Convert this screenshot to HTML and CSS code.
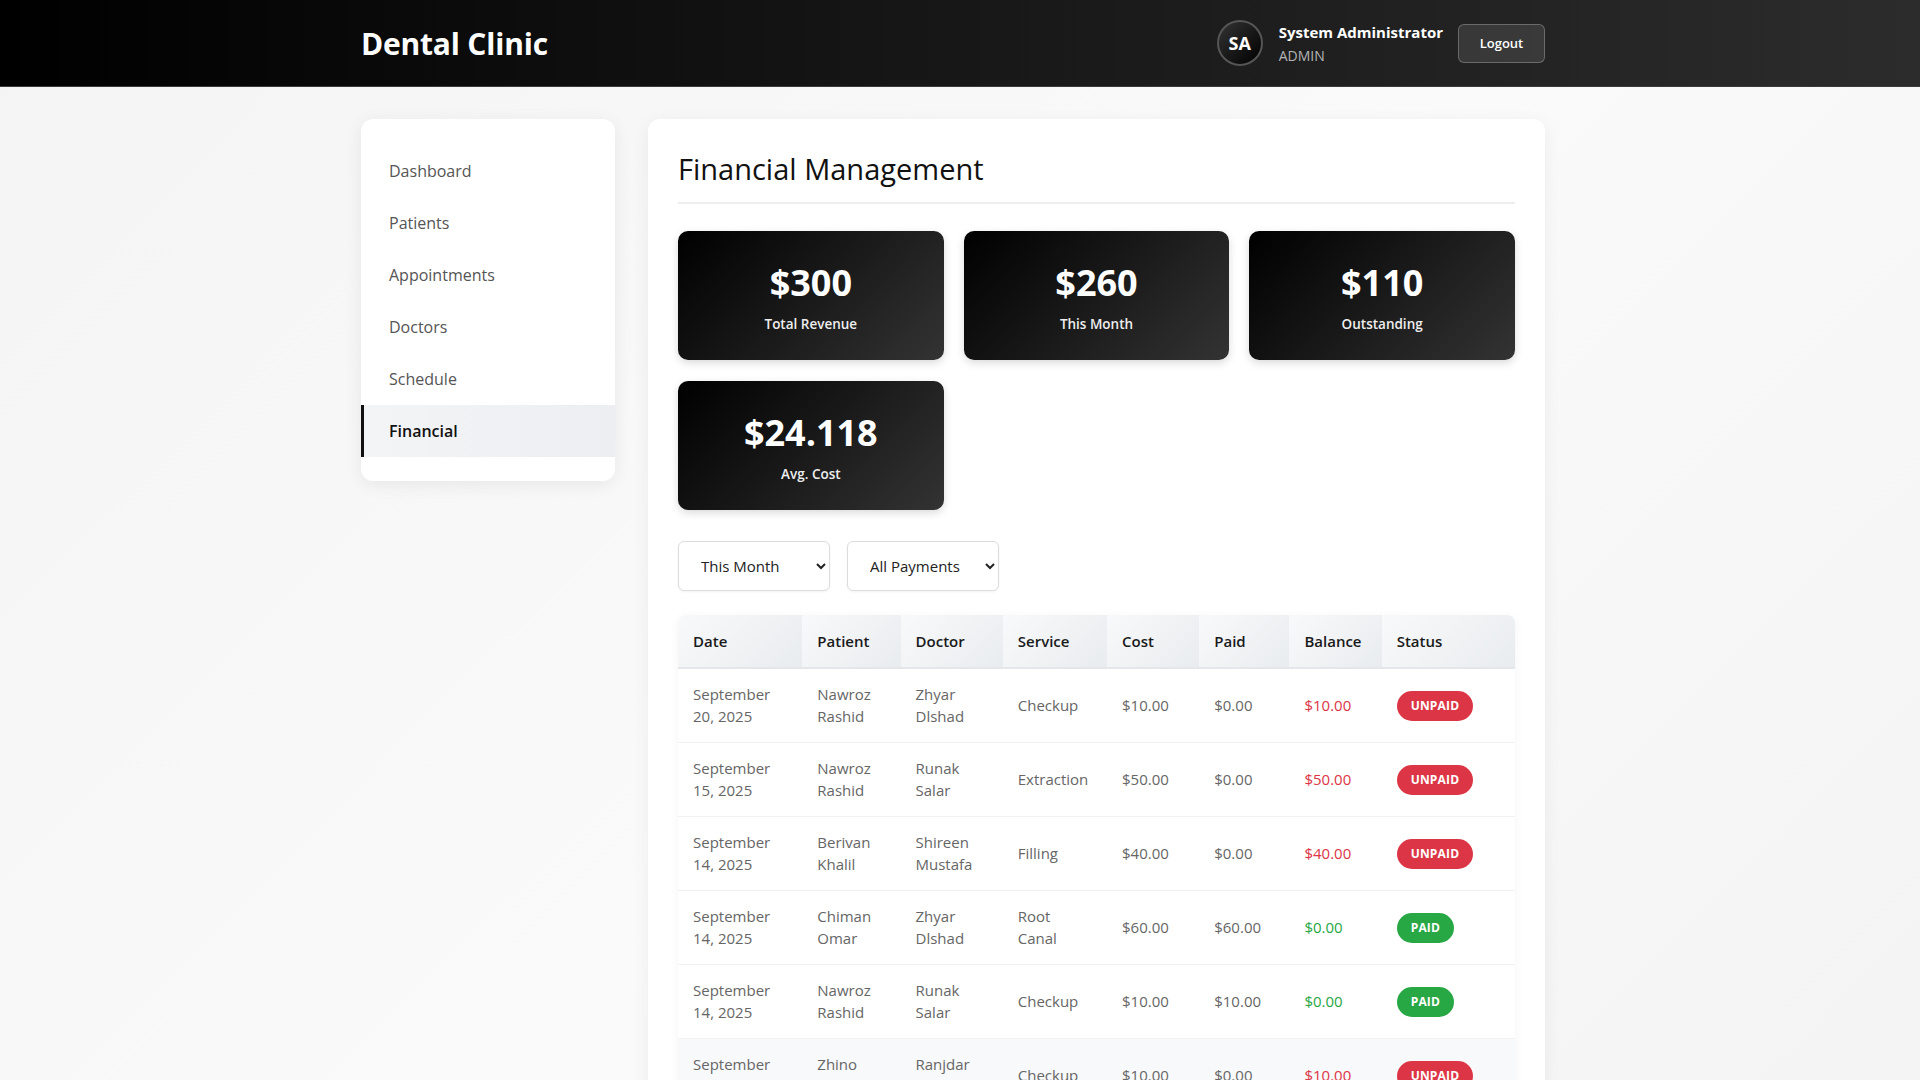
FILE: index.html
```html
<!DOCTYPE html>
<html lang="en">
<head>
  <meta charset="UTF-8">
  <meta name="viewport" content="width=device-width, initial-scale=1.0">
  <title>Dental Clinic - Financial</title>
  <link rel="stylesheet" href="styles.css">
</head>
<body>

<header class="topbar">
  <div class="topbar-inner">
    <h1 class="brand">Dental Clinic</h1>
    <div class="user-box">
      <div class="avatar">SA</div>
      <div class="user-info">
        <div class="user-name">System Administrator</div>
        <div class="user-role">ADMIN</div>
      </div>
      <button class="logout-btn">Logout</button>
    </div>
  </div>
</header>

<div class="layout">
  <aside class="sidebar">
    <ul class="side-nav">
      <li><a href="#">Dashboard</a></li>
      <li><a href="#">Patients</a></li>
      <li><a href="#">Appointments</a></li>
      <li><a href="#">Doctors</a></li>
      <li><a href="#">Schedule</a></li>
      <li class="active"><a href="#">Financial</a></li>
    </ul>
  </aside>

  <main class="content-card">
    <h2 class="page-title">Financial Management</h2>

    <div class="stats-grid">
      <div class="stat-card">
        <div class="stat-value">$300</div>
        <div class="stat-label">Total Revenue</div>
      </div>
      <div class="stat-card">
        <div class="stat-value">$260</div>
        <div class="stat-label">This Month</div>
      </div>
      <div class="stat-card">
        <div class="stat-value">$110</div>
        <div class="stat-label">Outstanding</div>
      </div>
      <div class="stat-card">
        <div class="stat-value">$24.118</div>
        <div class="stat-label">Avg. Cost</div>
      </div>
    </div>

    <div class="filters">
      <select class="filter-select">
        <option>This Month</option>
        <option>Last Month</option>
        <option>This Year</option>
      </select>
      <select class="filter-select">
        <option>All Payments</option>
        <option>Paid</option>
        <option>Unpaid</option>
      </select>
    </div>

    <div class="table-wrap">
      <table class="fin-table">
        <thead>
          <tr>
            <th class="c-date">Date</th>
            <th class="c-patient">Patient</th>
            <th class="c-doctor">Doctor</th>
            <th class="c-service">Service</th>
            <th class="c-cost">Cost</th>
            <th class="c-paid">Paid</th>
            <th class="c-balance">Balance</th>
            <th class="c-status">Status</th>
          </tr>
        </thead>
        <tbody>
          <tr>
            <td>September 20, 2025</td>
            <td>Nawroz Rashid</td>
            <td>Zhyar Dlshad</td>
            <td>Checkup</td>
            <td>$10.00</td>
            <td>$0.00</td>
            <td class="bal-due">$10.00</td>
            <td><span class="badge badge-unpaid">UNPAID</span></td>
          </tr>
          <tr>
            <td>September 15, 2025</td>
            <td>Nawroz Rashid</td>
            <td>Runak Salar</td>
            <td>Extraction</td>
            <td>$50.00</td>
            <td>$0.00</td>
            <td class="bal-due">$50.00</td>
            <td><span class="badge badge-unpaid">UNPAID</span></td>
          </tr>
          <tr>
            <td>September 14, 2025</td>
            <td>Berivan Khalil</td>
            <td>Shireen Mustafa</td>
            <td>Filling</td>
            <td>$40.00</td>
            <td>$0.00</td>
            <td class="bal-due">$40.00</td>
            <td><span class="badge badge-unpaid">UNPAID</span></td>
          </tr>
          <tr>
            <td>September 14, 2025</td>
            <td>Chiman Omar</td>
            <td>Zhyar Dlshad</td>
            <td>Root Canal</td>
            <td>$60.00</td>
            <td>$60.00</td>
            <td class="bal-ok">$0.00</td>
            <td><span class="badge badge-paid">PAID</span></td>
          </tr>
          <tr>
            <td>September 14, 2025</td>
            <td>Nawroz Rashid</td>
            <td>Runak Salar</td>
            <td>Checkup</td>
            <td>$10.00</td>
            <td>$10.00</td>
            <td class="bal-ok">$0.00</td>
            <td><span class="badge badge-paid">PAID</span></td>
          </tr>
          <tr class="row-hover">
            <td>September 13, 2025</td>
            <td>Zhino Ahmed</td>
            <td>Ranjdar Kamal</td>
            <td>Checkup</td>
            <td>$10.00</td>
            <td>$0.00</td>
            <td class="bal-due">$10.00</td>
            <td><span class="badge badge-unpaid">UNPAID</span></td>
          </tr>
          <tr>
            <td>September 12, 2025</td>
            <td>Chiman Omar</td>
            <td>Shireen Mustafa</td>
            <td>Cleaning</td>
            <td>$30.00</td>
            <td>$30.00</td>
            <td class="bal-ok">$0.00</td>
            <td><span class="badge badge-paid">PAID</span></td>
          </tr>
        </tbody>
      </table>
    </div>
  </main>
</div>

</body>
</html>
```

FILE: styles.css
```css
/* General */
* {
  box-sizing: border-box;
}
body {
  margin: 0;
  font-family: "Open Sans", "Noto Sans", Arial, sans-serif;
  color: #333;
  background: linear-gradient(135deg, #f4f4f4 0%, #fafafa 50%, #f3f3f3 100%);
  min-height: 100vh;
}

/* Top bar */
.topbar {
  background: linear-gradient(90deg, #000 0%, #151515 45%, #2c2c2c 100%);
  border-bottom: 1px solid #3a3a3a;
  height: 87px;
}
.topbar-inner {
  width: 1184px;
  margin-left: calc(50% - 599px);
  height: 100%;
  display: flex;
  align-items: center;
  justify-content: space-between;
}
.brand {
  margin: 0;
  color: #fff;
  font-size: 30px;
  font-weight: 700;
  letter-spacing: -0.2px;
}
.user-box {
  display: flex;
  align-items: center;
}
.avatar {
  width: 46px;
  height: 46px;
  border-radius: 50%;
  background: linear-gradient(135deg, #333 0%, #000 100%);
  border: 2px solid #555;
  color: #fff;
  font-weight: 700;
  font-size: 18px;
  display: flex;
  align-items: center;
  justify-content: center;
  margin-right: 16px;
}
.user-info {
  margin-right: 15px;
  padding-top: 2px;
}
.user-name {
  color: #fff;
  font-weight: 700;
  font-size: 15px;
  line-height: 21px;
}
.user-role {
  color: #b5b5b5;
  font-size: 14px;
  line-height: 22px;
  margin-top: 2px;
}
.logout-btn {
  font-family: inherit;
  background: rgba(255, 255, 255, 0.1);
  color: #fff;
  border: 1px solid rgba(255, 255, 255, 0.25);
  border-radius: 6px;
  width: 87px;
  height: 39px;
  font-size: 13px;
  font-weight: 600;
  cursor: pointer;
}

/* Layout */
.layout {
  width: 1184px;
  margin: 32px 0 0 calc(50% - 599px);
  display: flex;
  align-items: flex-start;
  gap: 33px;
}
.sidebar {
  width: 254px;
  flex-shrink: 0;
  background: #fff;
  border-radius: 12px;
  box-shadow: 0 4px 18px rgba(0, 0, 0, 0.07);
  padding: 26px 0 24px;
}
.side-nav {
  list-style: none;
  margin: 0;
  padding: 0;
}
.side-nav li a {
  display: block;
  height: 52px;
  line-height: 52px;
  padding-left: 25px;
  color: #555;
  font-size: 16px;
  font-weight: 500;
  text-decoration: none;
  border-left: 3px solid transparent;
}
.side-nav li.active a {
  background: linear-gradient(90deg, #f3f4f6 0%, #eceef1 100%);
  border-left-color: #111;
  color: #111;
  font-weight: 600;
}

/* Main card */
.content-card {
  flex: 1;
  background: #fff;
  border-radius: 12px;
  box-shadow: 0 4px 18px rgba(0, 0, 0, 0.06);
  padding: 30px 30px 40px;
}
.page-title {
  margin: 0 0 27px;
  font-size: 29px;
  font-weight: 500;
  color: #111;
  line-height: 40px;
  padding-bottom: 13px;
  border-bottom: 2px solid #eee;
}

/* Stats */
.stats-grid {
  display: grid;
  grid-template-columns: repeat(auto-fill, minmax(250px, 1fr));
  gap: 21px 20px;
  margin-bottom: 31px;
}
.stat-card {
  background: linear-gradient(135deg, #000 0%, #1c1c1c 55%, #333 100%);
  color: #fff;
  border-radius: 10px;
  text-align: center;
  padding: 30px 20px 26px;
  box-shadow: 0 3px 8px rgba(0, 0, 0, 0.15);
}
.stat-value {
  font-size: 36px;
  font-weight: 700;
  line-height: 44px;
}
.stat-label {
  margin-top: 9px;
  font-size: 13.5px;
  font-weight: 600;
  line-height: 20px;
  color: #eee;
}

/* Filters */
.filters {
  display: flex;
  gap: 17px;
  margin-bottom: 24px;
}
.filter-select {
  font-family: inherit;
  font-size: 15px;
  color: #222;
  background: #fff;
  border: 1px solid #ddd;
  border-radius: 6px;
  width: 152px;
  height: 50px;
  padding: 0 12px 0 18px;
  box-shadow: 0 1px 3px rgba(0, 0, 0, 0.05);
}

/* Table */
.table-wrap {
  border-radius: 8px;
  box-shadow: 0 2px 10px rgba(0, 0, 0, 0.05);
}
.fin-table {
  width: 100%;
  border-collapse: collapse;
  table-layout: fixed;
  font-size: 15px;
}
.fin-table th {
  text-align: left;
  font-weight: 600;
  color: #1a1a1a;
  background: linear-gradient(135deg, #f8f9fa 0%, #e9ecef 100%);
  padding: 15px;
  line-height: 22px;
  border-bottom: 2px solid #e4e6e9;
}
.fin-table th:first-child {
  border-top-left-radius: 8px;
}
.fin-table th:last-child {
  border-top-right-radius: 8px;
}
.c-date { width: 124px; }
.c-patient { width: 98px; }
.c-doctor { width: 102px; }
.c-service { width: 104px; }
.c-cost { width: 92px; }
.c-paid { width: 90px; }
.c-balance { width: 92px; }
.c-status { width: 133px; }
.fin-table td {
  padding: 15px;
  line-height: 21.5px;
  color: #666;
  border-bottom: 1px solid #f1f1f1;
  vertical-align: middle;
}
.fin-table tr.row-hover td {
  background: #f8f9fa;
}
.bal-due {
  color: #dc3545 !important;
}
.bal-ok {
  color: #28a745 !important;
}
.badge {
  display: inline-block;
  color: #fff;
  font-size: 12px;
  font-weight: 700;
  line-height: 18px;
  padding: 6px 14px;
  border-radius: 20px;
  letter-spacing: 0.2px;
}
.badge-unpaid {
  background: #dc3545;
}
.badge-paid {
  background: #28a745;
}
```
